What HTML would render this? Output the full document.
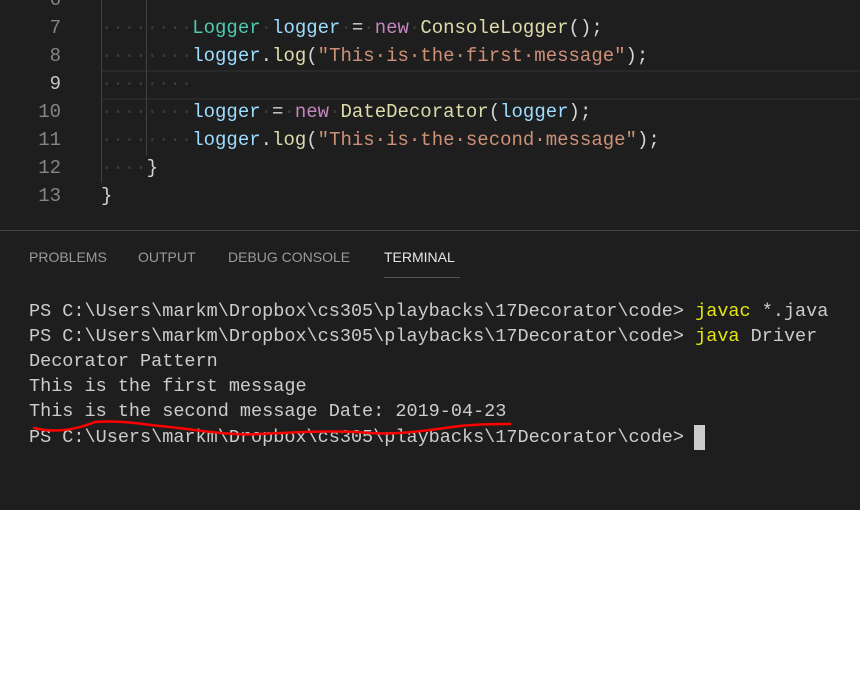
<!DOCTYPE html>
<html><head><style>
body{margin:0;width:860px;height:675px;background:#fff;overflow:hidden;position:relative;font-family:"Liberation Mono",monospace}
#dark{position:absolute;left:0;top:0;width:860px;height:510px;background:#1e1e1e}
.ln{position:absolute;left:0;width:61px;text-align:right;color:#858585;font-size:19px;line-height:28px}
.cl{position:absolute;left:101px;white-space:pre;color:#d4d4d4;font-size:19px;line-height:28px}
.dot{color:#3b3b3b}
.t{color:#4ec9b0}.v{color:#9cdcfe}.k{color:#c586c0}.f{color:#dcdcaa}.s{color:#ce9178}
.tab{position:absolute;top:249px;font-family:"Liberation Sans",sans-serif;font-size:14px;color:#9a9a9a}
.term{position:absolute;left:29px;white-space:pre;color:#cccccc;font-size:18.5px;line-height:25px}
.y{color:#e5e510}
</style></head><body>
<div id="dark">
<div style="position:absolute;left:101px;top:70px;width:759px;height:26px;border-top:2px solid #282828;border-bottom:2px solid #282828"></div>
<div style="position:absolute;left:101px;top:0;width:1px;height:183px;background:#404040"></div>
<div style="position:absolute;left:146px;top:0;width:1px;height:155px;background:#404040"></div>
<div class="ln" style="top:-14px">6</div>
<div class="ln" style="top:14px">7</div>
<div class="ln" style="top:42px">8</div>
<div class="ln" style="top:70px;color:#c6c6c6">9</div>
<div class="ln" style="top:98px">10</div>
<div class="ln" style="top:126px">11</div>
<div class="ln" style="top:154px">12</div>
<div class="ln" style="top:182px">13</div>
<div class="cl" style="top:14px"><span class="dot">········</span><span class="t">Logger</span><span class="dot">·</span><span class="v">logger</span><span class="dot">·</span>=<span class="dot">·</span><span class="k">new</span><span class="dot">·</span><span class="f">ConsoleLogger</span>();</div>
<div class="cl" style="top:42px"><span class="dot">········</span><span class="v">logger</span>.<span class="f">log</span>(<span class="s">"This·is·the·first·message"</span>);</div>
<div class="cl" style="top:70px"><span class="dot">········</span></div>
<div class="cl" style="top:98px"><span class="dot">········</span><span class="v">logger</span><span class="dot">·</span>=<span class="dot">·</span><span class="k">new</span><span class="dot">·</span><span class="f">DateDecorator</span>(<span class="v">logger</span>);</div>
<div class="cl" style="top:126px"><span class="dot">········</span><span class="v">logger</span>.<span class="f">log</span>(<span class="s">"This·is·the·second·message"</span>);</div>
<div class="cl" style="top:154px"><span class="dot">····</span>}</div>
<div class="cl" style="top:182px">}</div>
<div style="position:absolute;left:0;top:230px;width:860px;height:1px;background:#444"></div>
<div class="tab" style="left:29px">PROBLEMS</div>
<div class="tab" style="left:138px">OUTPUT</div>
<div class="tab" style="left:228px">DEBUG CONSOLE</div>
<div class="tab" style="left:384px;color:#e7e7e7">TERMINAL</div>
<div style="position:absolute;left:384px;top:277px;width:76px;height:1px;background:#555"></div>
<div class="term" style="top:299px">PS C:\Users\markm\Dropbox\cs305\playbacks\17Decorator\code> <span class="y">javac</span> *.java</div>
<div class="term" style="top:324px">PS C:\Users\markm\Dropbox\cs305\playbacks\17Decorator\code> <span class="y">java</span> Driver</div>
<div class="term" style="top:349px">Decorator Pattern</div>
<div class="term" style="top:374px">This is the first message</div>
<div class="term" style="top:399px">This is the second message Date: 2019-04-23</div>
<div class="term" style="top:425px">PS C:\Users\markm\Dropbox\cs305\playbacks\17Decorator\code> </div>
<div style="position:absolute;left:694px;top:425px;width:11px;height:25px;background:#cccccc"></div>
<svg style="position:absolute;left:0;top:0" width="860" height="510"><path d="M34 428 C50 432 70 432 95 422 C120 420 140 424 160 426 C200 430 230 436 260 434 C300 432 340 430 370 433 C400 435 430 430 460 426 C480 424 495 424 510 424" fill="none" stroke="#ff0000" stroke-width="2.5" stroke-linecap="round"/></svg>
</div>
</body></html>
